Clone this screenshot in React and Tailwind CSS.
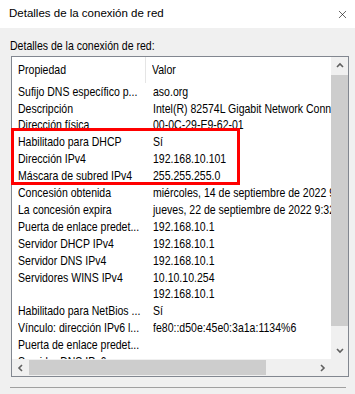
import { X } from 'lucide-react';

const rows = [
  ['Sufijo DNS específico p...', 'aso.org'],
  ['Descripción', 'Intel(R) 82574L Gigabit Network Connection'],
  ['Dirección física', '00-0C-29-E9-62-01'],
  ['Habilitado para DHCP', 'Sí'],
  ['Dirección IPv4', '192.168.10.101'],
  ['Máscara de subred IPv4', '255.255.255.0'],
  ['Concesión obtenida', 'miércoles, 14 de septiembre de 2022 9:12:40'],
  ['La concesión expira', 'jueves, 22 de septiembre de 2022 9:32:40'],
  ['Puerta de enlace predet...', '192.168.10.1'],
  ['Servidor DHCP IPv4', '192.168.10.1'],
  ['Servidor DNS IPv4', '192.168.10.1'],
  ['Servidores WINS IPv4', '10.10.10.254'],
  ['', '192.168.10.1'],
  ['Habilitado para NetBios ...', 'Sí'],
  ['Vínculo: dirección IPv6 l...', 'fe80::d50e:45e0:3a1a:1134%6'],
  ['Puerta de enlace predet...', ''],
  ['Servidor DNS IPv6', ''],
];

// the dialog font is narrower than Arial, so squeeze each label
const Txt = ({ children }) => (
  <span className="inline-block origin-left scale-x-[0.81] whitespace-nowrap">{children}</span>
);

const Chevron = ({ dir }) => {
  const pts = {
    up: '1,5 4,2 7,5',
    down: '1,2 4,5 7,2',
    left: '5,1 2,4 5,7',
    right: '2,1 5,4 2,7',
  }[dir];
  return (
    <svg width="8" height="8" viewBox="0 0 8 8">
      <polyline points={pts} fill="none" stroke="#606060" strokeWidth="1.6" />
    </svg>
  );
};

const App = () => {
  return (
    <div className="relative w-[355px] h-[394px] overflow-hidden bg-[#f0f0f0] text-black font-['Liberation_Sans',Arial,sans-serif]">
      <div className="h-[28px] bg-white flex items-center justify-between pl-[9px] pr-[6px]">
        <span className="text-[11.5px]">Detalles de la conexión de red</span>
        <X size={13} strokeWidth={1.1} className="text-black" />
      </div>

      <div className="px-[10px]">
        <p className="mt-[11px] h-[14px] leading-[14px] text-[13px]">
          <Txt>Detalles de la conexión de red:</Txt>
        </p>

        <div className="mt-[3px] ml-[1px] w-[338px] h-[321px] border border-[#828790] bg-white flex flex-col">
          <div className="flex flex-1 min-h-0">
            <div className="flex-1 overflow-hidden text-[13px]">
              <div className="h-[26px] flex items-center whitespace-nowrap">
                <div className="w-[134px] shrink-0 pl-[6px] border-r border-[#e5e5e5] h-full flex items-center">
                  <Txt>Propiedad</Txt>
                </div>
                <div className="pl-[6px]"><Txt>Valor</Txt></div>
              </div>
              {rows.map((r, i) => (
                <div key={i} className="h-[16.9px] flex items-center whitespace-nowrap">
                  <div className="w-[134px] shrink-0 pl-[6px]"><Txt>{r[0]}</Txt></div>
                  <div className="pl-[7px]"><Txt>{r[1]}</Txt></div>
                </div>
              ))}
            </div>
            <div className="w-[17px] bg-[#f0f0f0] flex flex-col">
              <div className="h-[17px] flex items-center justify-center"><Chevron dir="up" /></div>
              <div className="flex-1 pt-[1px] pb-[16px]">
                <div className="h-full bg-[#cdcdcd]" />
              </div>
              <div className="h-[17px] flex items-center justify-center"><Chevron dir="down" /></div>
            </div>
          </div>
          <div className="h-[17px] flex bg-[#f0f0f0]">
            <div className="w-[17px] flex items-center justify-center"><Chevron dir="left" /></div>
            <div className="flex-1 pr-[48px] py-[1px]">
              <div className="h-full bg-[#cdcdcd]" />
            </div>
            <div className="w-[17px] flex items-center justify-center"><Chevron dir="right" /></div>
            <div className="w-[17px]" />
          </div>
        </div>

        <div className="mt-[10px] h-px w-[336px] bg-[#a0a0a0]" />
      </div>

      <div className="absolute left-[11px] top-[128px] w-[229px] h-[57px] border-[3px] border-[#ff0000]" />
    </div>
  );
};

export default App;
